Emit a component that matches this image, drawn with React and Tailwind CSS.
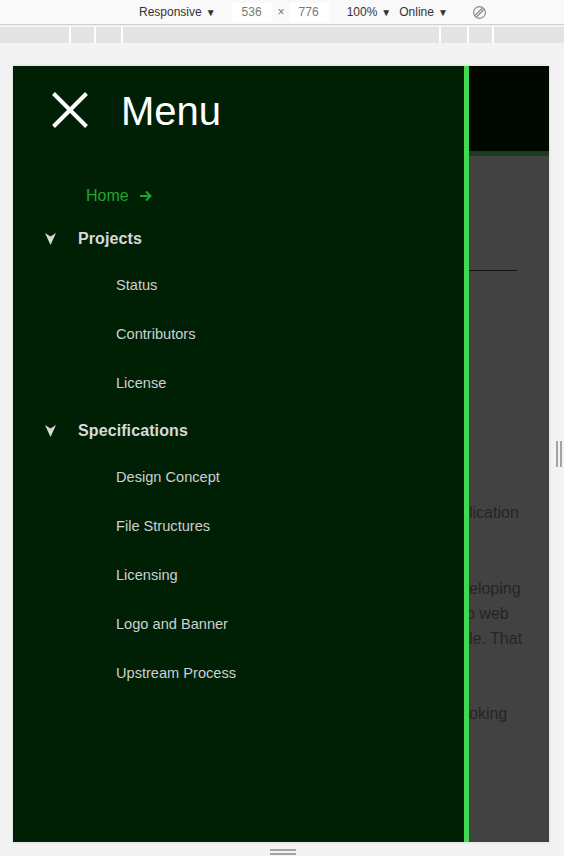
const projects = ['Status', 'Contributors', 'License'];
const specs = ['Design Concept', 'File Structures', 'Licensing', 'Logo and Banner', 'Upstream Process'];

function Caret() {
  return (
    <svg width="11" height="12" viewBox="0 0 11 12" className="shrink-0">
      <path d="M0 0 L5.5 3.5 L11 0 L5.5 12 Z" fill="#d8d8d8" />
    </svg>
  );
}

function Section({ title, items, top, listTop }) {
  return (
    <div style={{ marginTop: top }}>
      <div className="flex h-5 items-center">
        <div className="ml-[32px] w-[33px]">
          <Caret />
        </div>
        <span className="text-[16px] font-bold leading-5 tracking-[0.1px] text-[#d9d9d9]">{title}</span>
      </div>
      <ul className="flex flex-col gap-[29px]" style={{ marginTop: listTop }}>
        {items.map((item) => (
          <li key={item} className="h-5 pl-[103px] text-[14.6px] leading-5 text-[#cfcfcf]">
            {item}
          </li>
        ))}
      </ul>
    </div>
  );
}

export default function App() {
  return (
    <div className="flex h-[856px] w-[564px] flex-col overflow-hidden bg-[#f3f3f3] font-['Liberation_Sans',Arial,sans-serif]">
      {/* devtools toolbar */}
      <div className="flex h-[25px] shrink-0 items-center border-b border-[#cfcfcf] bg-[#f9f9fa] pl-[139px] text-[12px] text-[#333]">
        <span>Responsive</span>
        <span className="ml-[4px] text-[10px]">▼</span>
        <div className="ml-[16px] flex h-[19px] w-[40px] items-center justify-center bg-white text-[#777]">536</div>
        <span className="ml-[6px] text-[#777]">×</span>
        <div className="ml-[4px] flex h-[19px] w-[40px] items-center justify-center bg-white text-[#777]">776</div>
        <span className="ml-[18px]">100%</span>
        <span className="ml-[4px] text-[10px]">▼</span>
        <span className="ml-[8px]">Online</span>
        <span className="ml-[4px] text-[10px]">▼</span>
        <svg width="15" height="15" viewBox="0 0 16 16" className="ml-[24px]" fill="none" stroke="#8a8a8a" strokeWidth="1.2">
          <circle cx="8" cy="8" r="6.3" />
          <path d="M3.2 11.2 L11.2 3.2 M4.8 12.8 L12.8 4.8" />
        </svg>
      </div>

      {/* ruler */}
      <div className="mt-[2px] flex h-[16px] shrink-0 gap-[2px] bg-white">
        <div className="w-[69px] bg-[#e3e3e3]" />
        <div className="w-[23px] bg-[#e3e3e3]" />
        <div className="w-[25px] bg-[#e3e3e3]" />
        <div className="w-[316px] bg-[#e3e3e3]" />
        <div className="w-[26px] bg-[#e3e3e3]" />
        <div className="w-[23px] bg-[#e3e3e3]" />
        <div className="flex-1 bg-[#e3e3e3]" />
      </div>

      {/* viewport */}
      <div className="mt-[23px] flex items-center">
        <div className="ml-[13px] flex h-[776px] w-[536px] shrink-0 shadow-[0_0_3px_rgba(0,0,0,0.15)]">
          {/* menu panel */}
          <nav className="w-[451px] shrink-0 bg-[#002006]">
            <div className="flex items-center pl-[39px] pt-[25px]">
              <svg width="36" height="36" viewBox="0 0 36 36" stroke="white" strokeWidth="4">
                <path d="M1.5 1.5 L34.5 34.5 M34.5 1.5 L1.5 34.5" />
              </svg>
              <span className="ml-[33px] mt-[2px] text-[40px] leading-[36px] text-white">Menu</span>
            </div>

            <div className="mt-[57px] flex h-5 items-center pl-[73px] text-[16px] leading-5 text-[#21a52c]">
              <span>Home</span>
              <svg width="12" height="12" viewBox="0 0 12 12" className="ml-[11px]" fill="none" stroke="#21a52c" strokeWidth="2">
                <path d="M0 6 H10.5 M6 1.5 L10.5 6 L6 10.5" />
              </svg>
            </div>

            <Section title="Projects" items={projects} top={23} listTop={26} />
            <Section title="Specifications" items={specs} top={28} listTop={26} />
          </nav>

          <div className="w-[5px] shrink-0 bg-[#43d851]" />

          {/* page behind the menu */}
          <div className="flex min-w-0 flex-1 flex-col overflow-hidden bg-[#424242]">
            <div className="h-[85px] shrink-0 bg-[#000800]" />
            <div className="h-[5px] shrink-0 bg-[#1b3d1f]" />
            <div className="mt-[114px] h-px w-[48px] bg-[#111]" />
            <div className="whitespace-nowrap text-[16px] leading-[25px] text-[#252525]">
              <p className="mt-[229px]">lication</p>
              <p className="mt-[51px]">eloping</p>
              <p className="-ml-[3px]">o web</p>
              <p>le. That</p>
              <p className="mt-[50px]">oking</p>
            </div>
          </div>
        </div>

        <div className="ml-[7px] flex h-[26px] gap-[2px]">
          <div className="w-[2px] bg-[#a3a3a3]" />
          <div className="w-[2px] bg-[#a3a3a3]" />
        </div>
      </div>

      {/* bottom handle */}
      <div className="mt-[7px] flex flex-col items-center gap-[2px] pl-[1px]">
        <div className="h-[2px] w-[26px] bg-[#a3a3a3]" />
        <div className="h-[2px] w-[26px] bg-[#a3a3a3]" />
      </div>
    </div>
  );
}
